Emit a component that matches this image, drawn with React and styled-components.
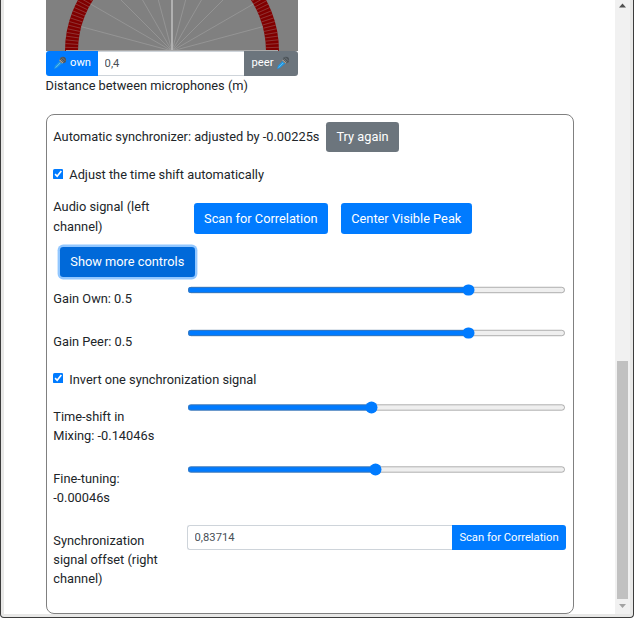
import React from "react";
import styled, { createGlobalStyle } from "styled-components";

const GlobalStyle = createGlobalStyle`
  * { box-sizing: border-box; }
  html, body { margin: 0; overflow: hidden; background: #fff; }
  body, button, input {
    font-family: Roboto, "Liberation Sans", sans-serif;
    font-size: 12.8px;
    line-height: 19.2px;
  }
  body { color: #212529; }
`;

const Window = styled.div`
  width: 634px;
  height: 618px;
  display: flex;
  background: #e8e8e7;
  border: 1px solid #3c3c3c;
  border-top: 0;
  border-radius: 0 0 4px 4px;
  padding: 0 3px 3px;
  overflow: hidden;
`;

const Content = styled.main`
  width: 611px;
  height: 614px;
  background: #fff;
  padding-left: 42px;
`;

const ScrollBar = styled.div`
  width: 15px;
  height: 614px;
  background: #f1f1f1;
  display: flex;
  flex-direction: column;
  align-items: center;
  justify-content: space-between;
`;

const ScrollArrow = styled.svg`
  display: block;
  width: 15px;
  height: 15px;
`;

const ScrollThumb = styled.div`
  width: 11px;
  height: 238px;
  margin-top: auto;
  background: #c1c1c1;
`;

const Dial = styled.svg`
  display: block;
  width: 252px;
  height: 51px;
`;

const InputGroup = styled.div`
  display: flex;
  width: ${(p) => p.$width}px;
  height: 25px;
`;

const SmallButton = styled.button`
  display: flex;
  align-items: center;
  justify-content: center;
  gap: 3px;
  flex: none;
  width: ${(p) => p.$width}px;
  height: 25px;
  padding: ${(p) => (p.$low ? "1px 0 0" : "0 0 1px")};
  border: 0;
  border-radius: ${(p) => (p.$side === "left" ? "3px 0 0 3px" : "0 3px 3px 0")};
  background: ${(p) => (p.$muted ? "#6c757d" : "#007bff")};
  color: #fff;
  font-size: 11.2px;
  line-height: 16.8px;
  white-space: nowrap;
`;

const TextField = styled.input`
  flex: 1;
  min-width: 0;
  height: 25px;
  padding: 0 6.6px;
  border: 1px solid #ced4da;
  border-left-width: ${(p) => (p.$joined ? 0 : 1)}px;
  border-right-width: 0;
  border-radius: ${(p) => (p.$joined ? "0" : "3px 0 0 3px")};
  color: #495057;
  background: #fff;
  font-size: 11.2px;
  outline: none;
`;

const MicDrawing = styled.svg`
  width: 14px;
  height: 14px;
  flex: none;
`;

const Caption = styled.div`
  height: 38px;
  margin-left: -0.4px;
`;

const Panel = styled.section`
  width: 528px;
  height: 500px;
  border: 1px solid #808080;
  border-radius: 8px;
  padding: 7px 6px 0 6.3px;
`;

const Row = styled.div`
  display: flex;
  align-items: ${(p) => p.$align || "center"};
  height: ${(p) => p.$height}px;
`;

const Label = styled.div`
  width: 133.7px;
  flex: none;
  padding: ${(p) => p.$top || 0}px 24px ${(p) => p.$bottom || 0}px 0;
`;

const Button = styled.button`
  height: ${(p) => p.$height || 31}px;
  width: ${(p) => p.$width}px;
  flex: none;
  margin-left: ${(p) => p.$gap}px;
  padding: 0;
  border: 0;
  border-radius: 3.2px;
  background: ${(p) => (p.$tone === "muted" ? "#6c757d" : p.$tone === "active" ? "#0069d9" : "#007bff")};
  box-shadow: ${(p) => (p.$tone === "active" ? "0 0 0 2.4px rgba(38, 143, 255, 0.5)" : "none")};
  color: #fff;
  white-space: nowrap;
`;

const Check = styled.input`
  zoom: 0.8;
  margin: ${(p) => p.$top || 0}px 7px 0 0;
  accent-color: #007bff;
`;

const Range = styled.input`
  zoom: 0.8;
  width: 473.6px;
  height: 16px;
  margin: 0;
  accent-color: #007bff;
`;

const polar = (r, deg) => {
  const a = (deg * Math.PI) / 180;
  return [126 - r * Math.cos(a), 51 - r * Math.sin(a)];
};

const radial = (from, to, deg) => {
  const [x1, y1] = polar(from, deg);
  const [x2, y2] = polar(to, deg);
  return `M${x1.toFixed(2)} ${y1.toFixed(2)}L${x2.toFixed(2)} ${y2.toFixed(2)}`;
};

const spokes = Array.from({ length: 11 }, (_, i) => radial(0, 94, (i + 1) * 15)).join("");
const ticks = Array.from({ length: 91 }, (_, i) => radial(94, 107, i * 2)).join("");

function DirectionDial() {
  return (
    <Dial viewBox="0 0 252 51">
      <rect width="252" height="51" fill="#808080" />
      <circle cx="126" cy="51" r="100.5" fill="none" stroke="#800000" strokeWidth="13" />
      <path d={ticks} stroke="#985050" strokeWidth="0.65" />
      <path d={spokes} stroke="#999" strokeWidth="0.8" />
      <path d="M126 0V51" stroke="#bbb" strokeWidth="1.6" />
      <path d="M20 50.5H232" stroke="#aaa" strokeWidth="1" />
    </Dial>
  );
}

function Mic() {
  return (
    <MicDrawing viewBox="0 0 14 14">
      <path d="M1 13.2L2 9.8L7.2 4.4L9.8 7L4.2 11.8Z" fill="#2196e3" />
      <path d="M2.6 11.6L8.2 5.8" stroke="#5dc0f5" strokeWidth="1" />
      <circle cx="9.9" cy="4" r="3.2" fill="#4c5358" />
      <path d="M7.5 2.6L11.1 6.2M9 1.5L12.3 4.8" stroke="#8d9499" strokeWidth="0.6" />
      <path d="M6.5 3.8L10 7.2" stroke="#b5a99c" strokeWidth="1.1" />
    </MicDrawing>
  );
}

function Slider({ label, value, height }) {
  return (
    <Row $height={height} $align="flex-start">
      <Label $top={5.8}>{label}</Label>
      <Range type="range" min="0" max="1" step="any" defaultValue={value} aria-label={label} />
    </Row>
  );
}

export default function App() {
  return (
    <>
      <GlobalStyle />
      <Window>
        <Content>
          <DirectionDial />
          <InputGroup $width={252}>
            <SmallButton $width={52} $side="left"><Mic />own</SmallButton>
            <TextField $joined defaultValue="0,4" aria-label="Distance" />
            <SmallButton $width={54} $side="right" $muted>peer<Mic /></SmallButton>
          </InputGroup>
          <Caption>Distance between microphones (m)</Caption>
          <Panel>
            <Row $height={30}>
              Automatic synchronizer: adjusted by -0.00225s
              <Button $width={73} $height={30} $gap={6.6} $tone="muted">Try again</Button>
            </Row>
            <Row as="label" $height={45}>
              <Check type="checkbox" defaultChecked />
              Adjust the time shift automatically
            </Row>
            <Row $height={43}>
              <Label $bottom={4}>Audio signal (left channel)</Label>
              <Button $width={134} $gap={6.8}>Scan for Correlation</Button>
              <Button $width={131} $gap={13}>Center Visible Peak</Button>
            </Row>
            <Row $height={43.7}>
              <Button $width={135} $height={30} $gap={6.5} $tone="active">Show more controls</Button>
            </Row>
            <Slider label="Gain Own: 0.5" value={0.751} height={43} />
            <Slider label="Gain Peer: 0.5" value={0.751} height={43.3} />
            <Row as="label" $height={31} $align="flex-start">
              <Check type="checkbox" defaultChecked $top={4} />
              Invert one synchronization signal
            </Row>
            <Slider label="Time-shift in Mixing: -0.14046s" value={0.486} height={62} />
            <Slider label="Fine-tuning: -0.00046s" value={0.497} height={62} />
            <Row $height={80} $align="flex-start">
              <Label $top={6}>Synchronization signal offset (right channel)</Label>
              <InputGroup $width={379}>
                <TextField defaultValue="0,83714" aria-label="Signal offset" />
                <SmallButton $width={114} $side="right" $low>Scan for Correlation</SmallButton>
              </InputGroup>
            </Row>
          </Panel>
        </Content>
        <ScrollBar>
          <ScrollArrow viewBox="0 0 15 15"><path d="M4 7.5L7.5 3.5L11 7.5Z" fill="#505050" /></ScrollArrow>
          <ScrollThumb />
          <ScrollArrow viewBox="0 0 15 15"><path d="M4 5L11 5L7.5 9Z" fill="#a3a3a3" /></ScrollArrow>
        </ScrollBar>
      </Window>
    </>
  );
}
